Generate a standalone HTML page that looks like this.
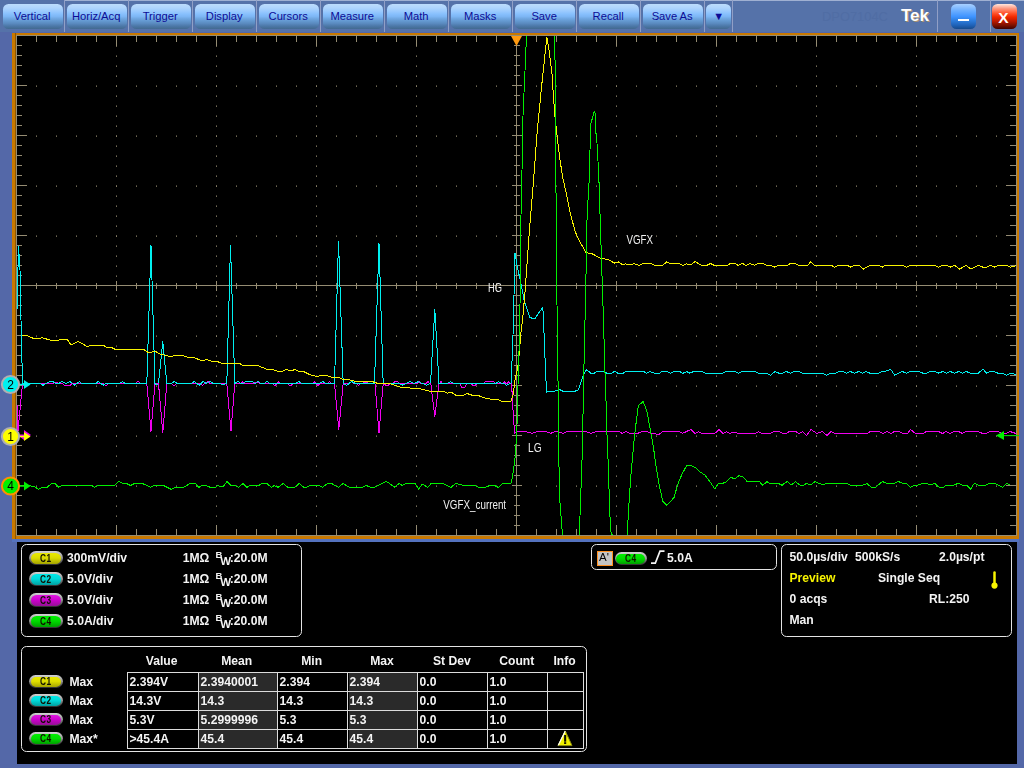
<!DOCTYPE html>
<html><head><meta charset="utf-8"><title>Tek scope</title><style>
html,body{margin:0;padding:0}
body{width:1024px;height:768px;overflow:hidden;background:#5468a8;position:relative;font-family:"Liberation Sans",Arial,sans-serif}
#mb{position:absolute;left:0;top:0;width:1024px;height:32px;background:#5572a9}
#mb:before{content:"";position:absolute;left:64px;top:0;right:0;height:1px;background:#9fb0d2}
.btn{position:absolute;top:4px;width:60.3px;height:25px;border-radius:5.5px;box-sizing:border-box;text-align:center;font-size:11.2px;line-height:24px;padding-right:2px;color:#0c0c96;
 background:linear-gradient(#bcdcfc 0%,#aed4fd 16%,#9ccbfe 28%,#88c0fd 40%,#7db6f4 50%,#6fa6e0 59%,#6499d0 68%,#5a8abf 78%,#4c78a8 88%,#42698f 100%)}
.sep{position:absolute;top:0;width:1px;height:32px;background:#919fc6}
#tek{position:absolute;left:901px;top:5.5px;font-weight:bold;font-size:17px;color:#fff;text-shadow:1px 1px 0 #a89070}
#model{position:absolute;left:822px;top:8.5px;font-size:12.9px;color:#506da4}
#min{left:951px;width:25px;background:linear-gradient(#a8d0ff 0%,#6fb0ff 25%,#3f94ff 50%,#2f7fe0 65%,#1f62b8 85%,#164a8c 100%)}
#min b{position:absolute;left:7px;top:14.8px;width:11px;height:2px;background:#fff}
#cls{left:992px;width:25px;color:#fff;font-weight:bold;font-size:15.5px;line-height:27px;text-shadow:none;background:linear-gradient(#ffe8e0 0%,#ff9880 18%,#ff5028 38%,#f02800 52%,#b81800 70%,#781000 86%,#400000 100%)}
#sc{position:absolute;left:0;top:0;will-change:transform}
#pn{position:absolute;left:0;top:0;width:1024px;height:768px;will-change:transform}
#bk{position:absolute;left:16.8px;top:541.8px;width:999.8px;height:222.6px;background:#000}
.bx{position:absolute;border:1px solid #e4e4e4;border-radius:5.5px;box-sizing:content-box}
.t{position:absolute;color:#f4f4f4;font-weight:bold;font-size:12.15px;line-height:14px;white-space:nowrap}
.bd{position:absolute;border-radius:7px;background:linear-gradient(#d2d2d2,#a0a0a0 45%,#505050 80%,#303030)}
.bd u{position:absolute;left:1.8px;top:2.1px;right:1.6px;bottom:1.3px;border-radius:6px;text-decoration:none;text-align:center;font-size:9.7px;font-weight:bold;color:#101000}
.bd i{display:inline-block;font-style:normal;transform:scale(.86,1.05);letter-spacing:.6px}
.c1{background:linear-gradient(#eaea00,#dcdc00 45%,#a4a400)}
.c2{background:linear-gradient(#00eaea,#00d8d8 45%,#00a0a0)}
.c3{background:linear-gradient(#e018e0,#cc00cc 45%,#961096)}
.c4{background:linear-gradient(#00f000,#00dc00 45%,#00a000)}
.ap{position:absolute;width:16px;height:15px;border:1px solid #ff9020;background:#c4c4c4;color:#000;font-size:11.5px;line-height:10.5px;text-align:center;box-sizing:border-box;padding-right:2px}
.sh{position:absolute;background:#2a2a2a}
</style></head><body>
<div id="mb">
<div class="btn" style="left:3px">Vertical</div>
<div class="btn" style="left:67px">Horiz/Acq</div>
<div class="btn" style="left:131px">Trigger</div>
<div class="btn" style="left:195px">Display</div>
<div class="btn" style="left:259px">Cursors</div>
<div class="btn" style="left:323px">Measure</div>
<div class="btn" style="left:387px">Math</div>
<div class="btn" style="left:451px">Masks</div>
<div class="btn" style="left:515px">Save</div>
<div class="btn" style="left:579px">Recall</div>
<div class="btn" style="left:643px">Save As</div>
<div class="btn" style="left:706.3px;width:25px;font-size:11px;padding:0">&#9660;</div>
<i class="sep" style="left:64px"></i>
<i class="sep" style="left:128px"></i>
<i class="sep" style="left:192px"></i>
<i class="sep" style="left:256px"></i>
<i class="sep" style="left:320px"></i>
<i class="sep" style="left:384px"></i>
<i class="sep" style="left:448px"></i>
<i class="sep" style="left:512px"></i>
<i class="sep" style="left:576px"></i>
<i class="sep" style="left:640px"></i>
<i class="sep" style="left:704px"></i>
<i class="sep" style="left:732px"></i>
<i class="sep" style="left:937px"></i>
<i class="sep" style="left:990px"></i>
<div id="model">DPO7104C</div><div id="tek">Tek</div>
<div class="btn" id="min"><b></b></div><div class="btn" id="cls">X</div>
</div>
<div id="bk"></div>
<svg id="sc" width="1024" height="768" viewBox="0 0 1024 768">
<rect x="12" y="539" width="1007" height="3" fill="#5472be"/>
<rect x="12" y="33" width="1007" height="506" fill="#c87800"/>
<rect x="15" y="33" width="1" height="506" fill="#8f5600"/>
<rect x="16" y="35" width="1001" height="501" fill="#958c73"/>
<rect x="17" y="36" width="999" height="499" fill="#000"/>
<g stroke="#958c73" stroke-width="1" shape-rendering="crispEdges" fill="none">
<path d="M116.5 45.5V535 M216.5 45.5V535 M316.5 45.5V535 M416.5 45.5V535 M616.5 45.5V535 M716.5 45.5V535 M816.5 45.5V535 M916.5 45.5V535" stroke="#8e866e" stroke-dasharray="1.3 8.7" shape-rendering="auto"/>
<path d="M36 86.15H1016 M36 136.15H1016 M36 186.15H1016 M36 236.15H1016 M36 336.15H1016 M36 386.15H1016 M36 436.15H1016 M36 486.15H1016" stroke="#8e866e" stroke-width="1.3" stroke-dasharray="1 19" shape-rendering="auto"/>
<path d="M17 285.5H1016 M516.5 36V535 M36.5 282.5V288.5 M36.5 36V42 M36.5 535V529 M56.5 282.5V288.5 M56.5 36V42 M56.5 535V529 M76.5 282.5V288.5 M76.5 36V42 M76.5 535V529 M96.5 282.5V288.5 M96.5 36V42 M96.5 535V529 M116.5 280.5V290.5 M116.5 36V46 M116.5 535V525 M136.5 282.5V288.5 M136.5 36V42 M136.5 535V529 M156.5 282.5V288.5 M156.5 36V42 M156.5 535V529 M176.5 282.5V288.5 M176.5 36V42 M176.5 535V529 M196.5 282.5V288.5 M196.5 36V42 M196.5 535V529 M216.5 280.5V290.5 M216.5 36V46 M216.5 535V525 M236.5 282.5V288.5 M236.5 36V42 M236.5 535V529 M256.5 282.5V288.5 M256.5 36V42 M256.5 535V529 M276.5 282.5V288.5 M276.5 36V42 M276.5 535V529 M296.5 282.5V288.5 M296.5 36V42 M296.5 535V529 M316.5 280.5V290.5 M316.5 36V46 M316.5 535V525 M336.5 282.5V288.5 M336.5 36V42 M336.5 535V529 M356.5 282.5V288.5 M356.5 36V42 M356.5 535V529 M376.5 282.5V288.5 M376.5 36V42 M376.5 535V529 M396.5 282.5V288.5 M396.5 36V42 M396.5 535V529 M416.5 280.5V290.5 M416.5 36V46 M416.5 535V525 M436.5 282.5V288.5 M436.5 36V42 M436.5 535V529 M456.5 282.5V288.5 M456.5 36V42 M456.5 535V529 M476.5 282.5V288.5 M476.5 36V42 M476.5 535V529 M496.5 282.5V288.5 M496.5 36V42 M496.5 535V529 M516.5 280.5V290.5 M516.5 36V46 M516.5 535V525 M536.5 282.5V288.5 M536.5 36V42 M536.5 535V529 M556.5 282.5V288.5 M556.5 36V42 M556.5 535V529 M576.5 282.5V288.5 M576.5 36V42 M576.5 535V529 M596.5 282.5V288.5 M596.5 36V42 M596.5 535V529 M616.5 280.5V290.5 M616.5 36V46 M616.5 535V525 M636.5 282.5V288.5 M636.5 36V42 M636.5 535V529 M656.5 282.5V288.5 M656.5 36V42 M656.5 535V529 M676.5 282.5V288.5 M676.5 36V42 M676.5 535V529 M696.5 282.5V288.5 M696.5 36V42 M696.5 535V529 M716.5 280.5V290.5 M716.5 36V46 M716.5 535V525 M736.5 282.5V288.5 M736.5 36V42 M736.5 535V529 M756.5 282.5V288.5 M756.5 36V42 M756.5 535V529 M776.5 282.5V288.5 M776.5 36V42 M776.5 535V529 M796.5 282.5V288.5 M796.5 36V42 M796.5 535V529 M816.5 280.5V290.5 M816.5 36V46 M816.5 535V525 M836.5 282.5V288.5 M836.5 36V42 M836.5 535V529 M856.5 282.5V288.5 M856.5 36V42 M856.5 535V529 M876.5 282.5V288.5 M876.5 36V42 M876.5 535V529 M896.5 282.5V288.5 M896.5 36V42 M896.5 535V529 M916.5 280.5V290.5 M916.5 36V46 M916.5 535V525 M936.5 282.5V288.5 M936.5 36V42 M936.5 535V529 M956.5 282.5V288.5 M956.5 36V42 M956.5 535V529 M976.5 282.5V288.5 M976.5 36V42 M976.5 535V529 M996.5 282.5V288.5 M996.5 36V42 M996.5 535V529 M513.5 45.5H519.5 M17 45.5H22 M1016 45.5H1010 M513.5 55.5H519.5 M17 55.5H22 M1016 55.5H1010 M513.5 65.5H519.5 M17 65.5H22 M1016 65.5H1010 M513.5 75.5H519.5 M17 75.5H22 M1016 75.5H1010 M511.5 85.5H521.5 M17 85.5H27 M1016 85.5H1006 M513.5 95.5H519.5 M17 95.5H22 M1016 95.5H1010 M513.5 105.5H519.5 M17 105.5H22 M1016 105.5H1010 M513.5 115.5H519.5 M17 115.5H22 M1016 115.5H1010 M513.5 125.5H519.5 M17 125.5H22 M1016 125.5H1010 M511.5 135.5H521.5 M17 135.5H27 M1016 135.5H1006 M513.5 145.5H519.5 M17 145.5H22 M1016 145.5H1010 M513.5 155.5H519.5 M17 155.5H22 M1016 155.5H1010 M513.5 165.5H519.5 M17 165.5H22 M1016 165.5H1010 M513.5 175.5H519.5 M17 175.5H22 M1016 175.5H1010 M511.5 185.5H521.5 M17 185.5H27 M1016 185.5H1006 M513.5 195.5H519.5 M17 195.5H22 M1016 195.5H1010 M513.5 205.5H519.5 M17 205.5H22 M1016 205.5H1010 M513.5 215.5H519.5 M17 215.5H22 M1016 215.5H1010 M513.5 225.5H519.5 M17 225.5H22 M1016 225.5H1010 M511.5 235.5H521.5 M17 235.5H27 M1016 235.5H1006 M513.5 245.5H519.5 M17 245.5H22 M1016 245.5H1010 M513.5 255.5H519.5 M17 255.5H22 M1016 255.5H1010 M513.5 265.5H519.5 M17 265.5H22 M1016 265.5H1010 M513.5 275.5H519.5 M17 275.5H22 M1016 275.5H1010 M511.5 285.5H521.5 M17 285.5H27 M1016 285.5H1006 M513.5 295.5H519.5 M17 295.5H22 M1016 295.5H1010 M513.5 305.5H519.5 M17 305.5H22 M1016 305.5H1010 M513.5 315.5H519.5 M17 315.5H22 M1016 315.5H1010 M513.5 325.5H519.5 M17 325.5H22 M1016 325.5H1010 M511.5 335.5H521.5 M17 335.5H27 M1016 335.5H1006 M513.5 345.5H519.5 M17 345.5H22 M1016 345.5H1010 M513.5 355.5H519.5 M17 355.5H22 M1016 355.5H1010 M513.5 365.5H519.5 M17 365.5H22 M1016 365.5H1010 M513.5 375.5H519.5 M17 375.5H22 M1016 375.5H1010 M511.5 385.5H521.5 M17 385.5H27 M1016 385.5H1006 M513.5 395.5H519.5 M17 395.5H22 M1016 395.5H1010 M513.5 405.5H519.5 M17 405.5H22 M1016 405.5H1010 M513.5 415.5H519.5 M17 415.5H22 M1016 415.5H1010 M513.5 425.5H519.5 M17 425.5H22 M1016 425.5H1010 M511.5 435.5H521.5 M17 435.5H27 M1016 435.5H1006 M513.5 445.5H519.5 M17 445.5H22 M1016 445.5H1010 M513.5 455.5H519.5 M17 455.5H22 M1016 455.5H1010 M513.5 465.5H519.5 M17 465.5H22 M1016 465.5H1010 M513.5 475.5H519.5 M17 475.5H22 M1016 475.5H1010 M511.5 485.5H521.5 M17 485.5H27 M1016 485.5H1006 M513.5 495.5H519.5 M17 495.5H22 M1016 495.5H1010 M513.5 505.5H519.5 M17 505.5H22 M1016 505.5H1010 M513.5 515.5H519.5 M17 515.5H22 M1016 515.5H1010 M513.5 525.5H519.5 M17 525.5H22 M1016 525.5H1010"/>
</g>
<defs><clipPath id="cp"><rect x="17" y="36" width="999" height="499"/></clipPath></defs>
<g clip-path="url(#cp)" fill="none" stroke-width="1" shape-rendering="crispEdges" stroke-linejoin="bevel">
<path stroke="#f000f0" d="M17.3 405 L18 431 L19.5 415 L22.5 383.6 L52.9 383.6 L54.7 382.3 L57 382.3 L58.8 383.6 L62.8 383.6 L64.6 385.4 L70 385.4 L71.8 383.6 L103.6 383.6 L105.4 385.4 L106.8 385.4 L108.6 383.6 L135.5 383.6 L137.3 381.6 L138.7 381.6 L140.5 383.6 L146.8 383.6 L151 431.5 L155 383.6 L158.5 383.6 L162.8 432.8 L166.8 383.6 L171.4 383.6 L173.2 385.4 L174.6 385.4 L176.4 383.6 L200.8 383.6 L202.6 385.4 L202.8 385.4 L204.6 383.6 L206.2 383.6 L208 381.6 L208.4 381.6 L210.2 383.6 L226.8 383.6 L231 431 L234.8 383.6 L240.9 383.6 L242.4 381.6 L242.4 381.6 L243.9 383.6 L252.9 383.6 L254.7 382.3 L258 382.3 L259.8 383.6 L272.8 383.6 L274.6 385.5 L275 385.5 L276.8 383.6 L277 383.6 L278.8 381.6 L278.8 381.6 L280.6 383.6 L287.7 383.6 L289.5 385.5 L290.9 385.5 L292.7 383.6 L312.6 383.6 L314.2 381.6 L314.2 381.6 L315.9 383.6 L316.2 383.6 L318 385.5 L318 385.5 L319.8 383.6 L327.6 383.6 L329.4 381.6 L329.8 381.6 L331.6 383.6 L334.5 383.6 L338.8 429.5 L343.2 383.6 L349.5 383.6 L351.3 381.6 L351.7 381.6 L353.5 383.6 L356.5 383.6 L358.3 385.5 L358.6 385.5 L360.4 383.6 L362.4 383.6 L364.2 382.3 L366.6 382.3 L368.4 383.6 L375 383.6 L379 432.8 L383.2 383.6 L384 383.6 L385.8 385.4 L388.2 385.4 L390 383.6 L393.2 383.6 L395 381.6 L397.5 381.6 L399.3 383.6 L417.2 383.6 L419 381.6 L419.4 381.6 L421.2 383.6 L426 383.6 L427.8 381.6 L428 381.6 L429.8 383.6 L430.8 383.6 L434.8 417 L439 383.6 L439.5 383.6 L441 381.6 L441 381.6 L442.5 383.6 L459.8 383.6 L461.6 387.4 L464.8 387.4 L466.6 383.6 L471.2 383.6 L473 385.4 L474.9 385.4 L476.7 383.6 L483.3 383.6 L485.1 381.7 L493.9 381.7 L495.7 383.6 L503 383.6 L504.5 381.7 L504.5 381.7 L506 383.6 L507 383.6 L508.4 381.7 L508.4 381.7 L509.8 383.6 L511.6 383.6 L513 410 L514.6 433.4 L516 431.9 L527 431.9 L531.9 433.4 L536 431.9 L547 431.9 L550.6 433.4 L554 431.9 L559 431.9 L562.8 433.4 L566 431.9 L587 431.9 L591 433.4 L595 431.9 L600 431.5 L618.8 431.5 L622.1 433.4 L626.2 431.5 L630 433.4 L637.5 433.4 L642.2 431.5 L646.9 431.5 L650.6 433.4 L655.3 433.8 L658.1 435.2 L662.8 431.5 L678.8 431.5 L682.5 433.4 L691 429.4 L694.7 433.4 L698.4 431.9 L702.2 433.4 L714.8 433.4 L719 429.6 L722.8 433.4 L726.6 431.9 L729.4 433.4 L734 431.9 L737.8 433.4 L755.6 433.4 L758.4 431.9 L762.2 433.4 L770.6 433.4 L774.4 431.5 L779 431.5 L782.8 433.4 L786 433.4 L789.5 431.5 L795.5 431.5 L799 433.5 L802.6 431.5 L806.7 435.5 L811 429.5 L817 433.5 L822.4 431.5 L827 435.5 L831.2 431.5 L834.8 433.5 L867 433.5 L870.5 431.5 L878.9 431.5 L883 433.5 L886.7 431.5 L890.8 433.5 L894.4 431.5 L899.1 431.5 L902.7 433.5 L907.5 433.5 L910.6 429.5 L915.3 433.5 L923 433.5 L926.5 431.5 L938.4 431.5 L942.5 433.5 L946.3 431.5 L950.4 433.5 L954.4 431.5 L958.7 431.5 L962.3 433.5 L966.3 431.5 L978.2 431.5 L982.5 433.5 L986.1 433.5 L989.7 431.5 L998 431.5 L1001.6 433.5 L1006.4 433.5 L1009.9 431.5 L1015.9 433.5"/>
<path stroke="#00f0f0" d="M16.5 383 L17 310 L18.5 246 L20 270 L21 320 L22.5 383.5 L29 383.5 L39.9 383.5 L42.9 385.3 L45.9 383.5 L49.9 381.5 L52.9 381.5 L55.8 383.5 L58.8 383.5 L61.8 381.5 L65.8 383.5 L69.8 381.5 L74.8 385.3 L79.3 381.5 L81.7 383.5 L95.7 383.5 L98.3 381.5 L100.7 383.5 L103.2 385.3 L105.6 383.5 L119.6 383.5 L122.6 381.5 L125.2 383.5 L146.5 383.5 L146.8 383.5 L151 245.2 L155 383.5 L156.5 385 L158.5 383.5 L162.8 341.5 L166.8 383.5 L171.4 383.5 L174.4 381.5 L177 383.5 L191.3 383.5 L194.3 381.5 L199.3 385.3 L203.2 381.5 L206.2 383.5 L210.2 381.5 L213.2 383.5 L220 383.5 L223 385 L226 383.5 L226.8 383.5 L230.5 245 L234.8 383.5 L238 381.5 L241 383.5 L243 383.5 L246 381.5 L252 381.5 L255 383.5 L258 381.5 L261 383.5 L264 383.5 L267 381.5 L270 383.5 L295.7 383.5 L298.7 381.5 L301.7 383.5 L319.6 383.5 L322.6 381.5 L325.6 383.5 L334.5 383.5 L338.5 241 L343.2 383.5 L346.5 385.5 L351.5 381.5 L355.5 383.5 L374.5 383.5 L379 243.5 L383.2 383.5 L399 383.5 L402 385.2 L406.4 383.5 L410 381.7 L413.7 383.5 L418.4 381.7 L422.5 383.5 L426.6 385.2 L430.5 383.5 L434.8 309.5 L439 383.5 L447.4 383.5 L450.6 381.7 L454 383.5 L495.7 383.5 L498.4 381.7 L501.6 383.5 L503.8 383.5 L506.7 385.2 L509.6 383.5 L511 383.5 L512.5 350 L513.5 320 L514.5 270 L515 253.3 L516.9 264 L518.8 273.5 L521.6 286.6 L524.4 301.6 L530 317.6 L534.7 318.9 L542.8 307.2 L543.5 320 L545 357.5 L546.5 392.2 L548.8 391.6 L556.2 390.9 L560 389.8 L562.8 391.2 L575 391.2 L578.4 389.8 L580.6 383.8 L583.4 374.4 L586.6 369.7 L591 373.4 L593.8 373.4 L597.5 371.2 L604 371.2 L606.9 373.4 L611.6 373.4 L614.8 371.2 L618 373.4 L622.8 373.4 L626.6 371.2 L643.4 371.2 L646.2 373.4 L650 371.6 L654.7 373.4 L659.4 373.4 L662.2 371.2 L666.9 371.2 L670.6 373.4 L674.4 371.2 L679 371.2 L682.8 373.4 L686.6 371.6 L690 373.2 L693.6 371.5 L702 371.5 L705.8 373.2 L722.7 373.2 L726.4 371.5 L734.9 371.5 L738.6 373.4 L742.4 371.5 L754.6 371.5 L758.3 373.2 L766.8 373.2 L770.5 375.2 L775.2 371.5 L779 373.2 L782.7 373.2 L786.4 371.5 L790.2 373.2 L794.5 371.5 L798.6 371.5 L802.4 373.2 L822 373.2 L826.8 375.2 L830.5 373.2 L835.2 373.2 L839 371.5 L842.7 371.5 L846.4 373.2 L850.2 371.5 L854.9 373.2 L858.6 371.5 L862.4 373.2 L866.1 371.5 L869.9 373.2 L877.4 373.2 L878.9 373.2 L882.2 371.5 L887.3 370.9 L890.5 369.2 L894.8 375.2 L902.3 371.5 L906.6 373.2 L910.4 371.5 L919.2 371.5 L922.9 373.2 L926.7 373.2 L930.4 371.5 L935.1 371.5 L938.9 373.2 L942.6 371.5 L946.4 373.2 L950.1 371.5 L954.8 373.2 L958.6 371.5 L962.3 373.2 L966.1 371.5 L970.8 373.2 L978.2 373.2 L983 369.2 L986.7 373.2 L990.4 371.5 L994.2 371.5 L998 373.2 L1002.6 373.2 L1006.4 375.1 L1011.1 373.2 L1015.8 374.7"/>
<path stroke="#f8f400" d="M22 335.3 L26 335.3 L34.8 339 L42.2 337.8 L53.5 341 L62.2 339.5 L67.2 339.5 L71 344.8 L78.5 341.5 L87.2 346.5 L91 345.2 L103.5 345.2 L106 347 L112.2 347.8 L114.8 349.2 L143.5 349.2 L148.5 352.8 L152.2 352 L154.8 351 L161 354.8 L166 355.2 L170.2 357 L174.8 355.2 L182.2 355.2 L187.2 357.2 L194.8 357.8 L202.2 361 L206.5 359.5 L211 361 L217.2 361.5 L222.2 363.5 L239.8 363.5 L242.2 365.2 L258.5 365.8 L266 369 L272 369.2 L277 371 L283 371 L286.5 369.5 L290.8 371 L295 369.5 L299.5 371.5 L304.5 372 L309.5 374.5 L317 376.5 L323.2 375.2 L328.2 376 L333.2 377.8 L339.5 377.8 L343.2 379.5 L352 380.2 L355.8 381.5 L372 381.5 L377 383.2 L389.5 383.5 L397 386 L402 387.8 L417 388.2 L423.2 389.5 L430.8 391.5 L444.5 391.5 L447 393.2 L450.8 392 L455.8 395.2 L463.2 395.2 L467 393.5 L472 395.2 L479.5 396 L484.5 397.8 L489.5 399 L498.2 399.8 L502 401.5 L510.8 401.5 L513.2 394 L515 380 L517.8 366.9 L519.7 348 L521.2 329.4 L522.6 320 L525.3 288.5 L529.3 232 L533.9 176 L536.9 135 L541.6 86.4 L545 54.5 L546.9 37.2 L549.1 50.8 L552.1 75.1 L553.6 100 L554.1 105 L555 117 L556 126 L557 135 L558 144 L560 159.5 L562.4 176 L566.6 194.8 L570.3 213.5 L575.4 232.2 L579.7 241.6 L586.2 252.9 L591 253.2 L601.2 258.5 L607.8 259.4 L614.8 263.2 L618.5 261.9 L622.8 265 L625.6 263.8 L629.4 265 L634 263.6 L638.8 265.4 L643.4 263.6 L651 263.6 L654.7 265.4 L663 265 L666.9 261.7 L669.7 263.6 L679 263.6 L682.8 265.4 L686.6 263.8 L688 264.6 L691.8 264.1 L695.1 261.6 L699.2 264.1 L702 265.4 L706.8 265.4 L710.5 263.5 L714.2 265.4 L727.4 265.4 L730.2 263.5 L734.9 263.5 L738.2 265.4 L742.4 263.5 L746.1 265.4 L749.9 263.5 L754.6 265.4 L758.3 263.5 L763 263.5 L766.8 265.4 L771.4 265.8 L774.2 267.2 L778 265.4 L787.4 265.4 L790.2 263.5 L794.9 263.5 L798.6 265.4 L807.6 265.4 L810.8 261.6 L814.6 265.4 L831.4 265.4 L834.6 267.2 L838 265.4 L847.4 265.4 L850.8 267.2 L853.9 265.4 L859.6 265.8 L863.3 269.1 L867 266.9 L870.8 265.4 L878.9 265.4 L882.2 267.2 L885.4 265.4 L903.2 265.4 L906.6 267.2 L910.4 265.4 L935.1 265.4 L938.5 267.2 L942.2 265.4 L946.4 265.4 L950.1 267.2 L954.8 265.4 L959.5 269.1 L966 265.4 L971.1 269.1 L978.2 265.4 L983 267.2 L986.7 267.2 L990.4 265.4 L994.2 267.2 L998 265.4 L1006.4 265.4 L1010.1 267.2 L1015.8 265.8"/>
<path stroke="#00f000" d="M29 485.5 L34.9 486.9 L38.3 489.3 L41.9 487.5 L46.9 487.5 L51.5 483.5 L54.8 483.5 L58.8 487.3 L61.8 485.5 L91.7 485.5 L94.7 487.3 L98.1 485.5 L114.6 485.5 L119 481.3 L122.6 483.5 L126.6 483.5 L130.5 485.5 L134.5 483.5 L142.5 483.5 L150.5 487.3 L154.4 485.5 L163.4 485.5 L171 489.3 L175.4 487.3 L183.3 487.3 L190.3 483.5 L195.3 483.5 L198.9 487.3 L202.2 485.5 L206.2 485.5 L210.2 487.3 L215.2 487.3 L218.2 485.5 L220 486.9 L223 486.9 L227 481.3 L231 485.5 L234.9 485.5 L238.9 487.3 L242.9 483.5 L246.9 487.3 L249.9 485.5 L258.8 485.5 L261.8 483.5 L266.8 483.5 L271.4 487.3 L274.2 485.5 L278.2 487.3 L283.3 483.5 L287.7 487.3 L294.7 487.3 L299.1 483.5 L303.7 487.3 L306.7 487.3 L309.6 485.5 L318.6 485.5 L322.6 487.3 L327.6 483.5 L331.6 483.5 L338.5 487.3 L343.1 483.5 L349.5 487.3 L362.4 487.3 L366.4 485.5 L370.4 487.3 L374.4 487.3 L386.3 481.3 L394.9 487.3 L398.9 483.5 L402.3 485.5 L406.2 483.5 L415.2 483.5 L418.6 489.3 L422.2 484 L423.8 484.8 L427.5 487.5 L431.2 483.4 L442.5 483.4 L451 487.5 L455.6 483.4 L463 485.3 L475.3 485.7 L478 487.2 L485.6 487.2 L490.3 485.3 L495 485.7 L498.4 487.5 L502.5 483.4 L511 483 L511.8 480 L513.5 470 L515.2 456 L516.7 435 L517.5 408 L518.3 371 L519.4 340 L520 305 L520.5 260 L521 215 L522 170 L522.5 140 L523 116 L524 92.7 L525 71 L526 47.7 L526.5 36 L527.2 20.0 M554 20 L554.4 36 L555 60 L555.5 124 L556.5 260 L557.4 340 L558.3 400.6 L559.3 493.8 L562.5 535 L563.5 548.0 M578.8 548 L579.4 535 L580 516 L582.2 455 L583.4 395 L584.6 335 L585.9 288.5 L586.2 251 L587.2 213.5 L589.4 176 L590 150 L590.5 125 L591.5 121 L592.5 118 L593.5 114 L594.5 111 L595.5 115 L595.5 133 L596.5 134 L597.5 152 L598.8 176 L600.3 222.9 L601.2 251 L602.4 288.5 L603.5 320 L604 338.8 L605 372.5 L606 400.6 L606.9 432.5 L607.9 456 L609.8 512.5 L610.7 531.2 L612.2 535 L616 548.0 M627 548 L627.4 535 L627.8 523.8 L628.7 507.8 L630.9 475 L634.3 437.5 L636.6 418.8 L638.4 405.6 L643.1 401.5 L646.9 411.2 L650 428 L653.4 446.9 L655.9 465.6 L659 484.4 L662.8 501.2 L666.9 505.4 L674 497.5 L677.8 484.4 L681.6 475 L686.6 465.6 L691 465.6 L695.2 467.5 L700.3 472.2 L705 475 L710.6 482.5 L714.8 489 L718.5 483.4 L722.8 483.4 L726.6 481.6 L730.9 477.2 L734.6 479 L739.1 475.6 L743.4 477.2 L747.2 481.6 L759.4 481.6 L762.8 485.3 L766.9 481.6 L769.7 483.4 L778.1 483.4 L782.2 485.3 L783.6 483.9 L787.1 481.5 L791.4 485 L795.5 481.5 L799.5 485 L803.8 485 L806.7 483.4 L811 485 L815 481.5 L819.3 483.4 L822.9 485 L826.5 483.4 L846.7 483.4 L850.3 485 L863.4 485 L867 483.4 L871.2 487.4 L875.3 487.4 L882.5 481.5 L886.7 483.4 L894.4 483.4 L898.4 481.5 L902.7 483.4 L906.3 483.4 L910.6 487.4 L914.6 485 L918.2 485 L922.5 483.4 L926.5 483.4 L930.6 485 L934.9 483.4 L939.2 487.4 L943.2 487.4 L946.8 485 L953.9 485 L958.2 483.4 L962.3 485 L966.3 485 L970.6 489.3 L974.2 483.4 L978.2 485 L986.1 485 L989.7 483.4 L994.4 483.4 L998 485 L1002.8 487.4 L1006.8 483.4 L1010 485.0"/>
</g>
<path d="M511 36H522L516.5 46Z" fill="#ff9a10"/>
<path d="M996 435.5L1004 431V440Z" fill="#00f000"/><path d="M1004 435.6H1019" stroke="#00d800" stroke-width="1.1"/>
<g fill="#f0f0f0" font-family="Liberation Sans, Arial, sans-serif" font-size="12">
<text x="626.5" y="244" textLength="26.5" lengthAdjust="spacingAndGlyphs">VGFX</text>
<text x="488" y="292" textLength="14" lengthAdjust="spacingAndGlyphs">HG</text>
<text x="528" y="452" textLength="13.5" lengthAdjust="spacingAndGlyphs">LG</text>
<text x="443.3" y="509" textLength="62.8" lengthAdjust="spacingAndGlyphs">VGFX_current</text>
</g>
<g><path d="M17 383.7 H24 V379.9 L30.6 384.5 L24 389.1 V385.3 H17Z" fill="#00f0f0"/><circle cx="10.5" cy="384.5" r="8.6" fill="#00f0f0" stroke="#b0b0b0" stroke-width="2"/><text x="10.5" y="388.8" text-anchor="middle" font-family="Liberation Sans, Arial, sans-serif" font-size="12" fill="#000">2</text></g>
<path d="M17 434.5H24V430L31 435L24 440Z" fill="#f000f0"/>
<g><path d="M17 435.7 H24 V431.9 L30.6 436.5 L24 441.1 V437.3 H17Z" fill="#ffff00"/><circle cx="10.5" cy="436.5" r="8.6" fill="#ffff00" stroke="#b0b0b0" stroke-width="2"/><text x="10.5" y="440.8" text-anchor="middle" font-family="Liberation Sans, Arial, sans-serif" font-size="12" fill="#000">1</text></g>
<g><path d="M17 485.2 H24 V481.4 L30.6 486 L24 490.6 V486.8 H17Z" fill="#00f000"/><circle cx="10.5" cy="486" r="8.6" fill="#00f000" stroke="#ff9000" stroke-width="2"/><text x="10.5" y="490.3" text-anchor="middle" font-family="Liberation Sans, Arial, sans-serif" font-size="12" fill="#000">4</text></g>
</svg>
<div id="pn">
<div class="bx" style="left:21px;top:544px;width:279px;height:91px"></div>
<span class="bd" style="left:29px;top:551px;width:34px;height:14px"><u class="c1" style="line-height:11.0px"><i>C1</i></u></span>
<span class="t" style="left:67px;top:551.0px;">300mV/div</span>
<span class="t" style="left:182.7px;top:551.0px;">1M&#937;</span>
<span class="t" style="left:215.5px;top:547.8px;font-size:9.5px">B</span>
<span class="t" style="left:220.3px;top:554.0px;font-size:11.5px">W</span>
<span class="t" style="left:229.8px;top:551.0px;">:20.0M</span>
<span class="bd" style="left:29px;top:572px;width:34px;height:14px"><u class="c2" style="line-height:11.0px"><i>C2</i></u></span>
<span class="t" style="left:67px;top:572.0px;">5.0V/div</span>
<span class="t" style="left:182.7px;top:572.0px;">1M&#937;</span>
<span class="t" style="left:215.5px;top:568.8px;font-size:9.5px">B</span>
<span class="t" style="left:220.3px;top:575.0px;font-size:11.5px">W</span>
<span class="t" style="left:229.8px;top:572.0px;">:20.0M</span>
<span class="bd" style="left:29px;top:593px;width:34px;height:14px"><u class="c3" style="line-height:11.0px"><i>C3</i></u></span>
<span class="t" style="left:67px;top:593.0px;">5.0V/div</span>
<span class="t" style="left:182.7px;top:593.0px;">1M&#937;</span>
<span class="t" style="left:215.5px;top:589.8px;font-size:9.5px">B</span>
<span class="t" style="left:220.3px;top:596.0px;font-size:11.5px">W</span>
<span class="t" style="left:229.8px;top:593.0px;">:20.0M</span>
<span class="bd" style="left:29px;top:614px;width:34px;height:14px"><u class="c4" style="line-height:11.0px"><i>C4</i></u></span>
<span class="t" style="left:67px;top:614.0px;">5.0A/div</span>
<span class="t" style="left:182.7px;top:614.0px;">1M&#937;</span>
<span class="t" style="left:215.5px;top:610.8px;font-size:9.5px">B</span>
<span class="t" style="left:220.3px;top:617.0px;font-size:11.5px">W</span>
<span class="t" style="left:229.8px;top:614.0px;">:20.0M</span>
<div class="bx" style="left:590.6px;top:544px;width:184.4px;height:24px"></div>
<span class="ap" style="left:597px;top:551px">A'</span>
<span class="bd" style="left:614.5px;top:551.5px;width:32.5px;height:13.5px"><u class="c4" style="line-height:10.5px"><i>C4</i></u></span>
<svg style="position:absolute;left:650px;top:549px" width="16" height="16"><path d="M1 14.2H5.3L10 2.2H14.5" fill="none" stroke="#f4f4f4" stroke-width="1.7"/></svg>
<span class="t" style="left:667px;top:550.9px;">5.0A</span>
<div class="bx" style="left:781px;top:544px;width:229px;height:91px"></div>
<span class="t" style="left:789.5px;top:550.4px;">50.0&#181;s/div</span>
<span class="t" style="left:855px;top:550.4px;">500kS/s</span>
<span class="t" style="left:939px;top:550.4px;">2.0&#181;s/pt</span>
<span class="t" style="left:789.5px;top:571.4px;color:#f8f400">Preview</span>
<span class="t" style="left:878px;top:571.4px;">Single Seq</span>
<svg style="position:absolute;left:989px;top:571px" width="12" height="20"><path d="M5.5 1.5V14" stroke="#f8f400" stroke-width="2.5" stroke-linecap="round"/><circle cx="5.5" cy="14.6" r="3.1" fill="#f8f400"/></svg>
<span class="t" style="left:789.5px;top:592.4px;">0 acqs</span>
<span class="t" style="left:929px;top:592.4px;">RL:250</span>
<span class="t" style="left:789.5px;top:613.4px;">Man</span>
<div class="bx" style="left:21px;top:646px;width:563.6px;height:104px"></div>
<div class="sh" style="left:199px;top:673px;width:78px;height:75px"></div>
<div class="sh" style="left:348.5px;top:673px;width:68.5px;height:75px"></div>
<span class="t" style="left:121.69999999999999px;top:654px;width:80px;text-align:center">Value</span>
<span class="t" style="left:196.7px;top:654px;width:80px;text-align:center">Mean</span>
<span class="t" style="left:271.7px;top:654px;width:80px;text-align:center">Min</span>
<span class="t" style="left:342px;top:654px;width:80px;text-align:center">Max</span>
<span class="t" style="left:411.8px;top:654px;width:80px;text-align:center">St Dev</span>
<span class="t" style="left:476.79999999999995px;top:654px;width:80px;text-align:center">Count</span>
<span class="t" style="left:524.6px;top:654px;width:80px;text-align:center">Info</span>
<svg style="position:absolute;left:0;top:0" width="1024" height="768" shape-rendering="crispEdges"><path fill="none" stroke="#dcdcdc" stroke-width="1" d="M127 672.5H584 M127 691.5H584 M127 710.5H584 M127 729.5H584 M127 748.5H584 M127.5 672V749 M198.5 672V749 M277.5 672V749 M347.5 672V749 M417.5 672V749 M487.5 672V749 M547.5 672V749 M583.5 672V749"/></svg>
<span class="bd" style="left:29px;top:674.5px;width:33.5px;height:13.5px"><u class="c1" style="line-height:10.5px"><i>C1</i></u></span>
<span class="t" style="left:69.5px;top:674.9px;">Max</span>
<span class="t" style="left:129.5px;top:674.9px;">2.394V</span>
<span class="t" style="left:200.5px;top:674.9px;">2.3940001</span>
<span class="t" style="left:279.5px;top:674.9px;">2.394</span>
<span class="t" style="left:349.5px;top:674.9px;">2.394</span>
<span class="t" style="left:419.5px;top:674.9px;">0.0</span>
<span class="t" style="left:489.5px;top:674.9px;">1.0</span>
<span class="bd" style="left:29px;top:693.5px;width:33.5px;height:13.5px"><u class="c2" style="line-height:10.5px"><i>C2</i></u></span>
<span class="t" style="left:69.5px;top:693.9px;">Max</span>
<span class="t" style="left:129.5px;top:693.9px;">14.3V</span>
<span class="t" style="left:200.5px;top:693.9px;">14.3</span>
<span class="t" style="left:279.5px;top:693.9px;">14.3</span>
<span class="t" style="left:349.5px;top:693.9px;">14.3</span>
<span class="t" style="left:419.5px;top:693.9px;">0.0</span>
<span class="t" style="left:489.5px;top:693.9px;">1.0</span>
<span class="bd" style="left:29px;top:712.5px;width:33.5px;height:13.5px"><u class="c3" style="line-height:10.5px"><i>C3</i></u></span>
<span class="t" style="left:69.5px;top:712.9px;">Max</span>
<span class="t" style="left:129.5px;top:712.9px;">5.3V</span>
<span class="t" style="left:200.5px;top:712.9px;">5.2999996</span>
<span class="t" style="left:279.5px;top:712.9px;">5.3</span>
<span class="t" style="left:349.5px;top:712.9px;">5.3</span>
<span class="t" style="left:419.5px;top:712.9px;">0.0</span>
<span class="t" style="left:489.5px;top:712.9px;">1.0</span>
<span class="bd" style="left:29px;top:731.5px;width:33.5px;height:13.5px"><u class="c4" style="line-height:10.5px"><i>C4</i></u></span>
<span class="t" style="left:69.5px;top:731.9px;">Max*</span>
<span class="t" style="left:129.5px;top:731.9px;">&gt;45.4A</span>
<span class="t" style="left:200.5px;top:731.9px;">45.4</span>
<span class="t" style="left:279.5px;top:731.9px;">45.4</span>
<span class="t" style="left:349.5px;top:731.9px;">45.4</span>
<span class="t" style="left:419.5px;top:731.9px;">0.0</span>
<span class="t" style="left:489.5px;top:731.9px;">1.0</span>
<svg style="position:absolute;left:556px;top:729px" width="18" height="18"><path d="M9.3 2L16 16.6H2.2Z" fill="#f0f000"/><path d="M9.3 2L2.2 16.6" stroke="#ffffd8" stroke-width="1.2" fill="none"/><path d="M9.3 2L16 16.6H2.2" stroke="#8c8c10" stroke-width="1" fill="none"/><path d="M9.3 2L2.2 16.4" stroke="#ffffe8" stroke-width="1" fill="none"/><rect x="8.1" y="6" width="2.1" height="6.7" fill="#101000"/><rect x="8.1" y="13.2" width="2.1" height="1.8" fill="#101000"/></svg>
</div>
</body></html>
